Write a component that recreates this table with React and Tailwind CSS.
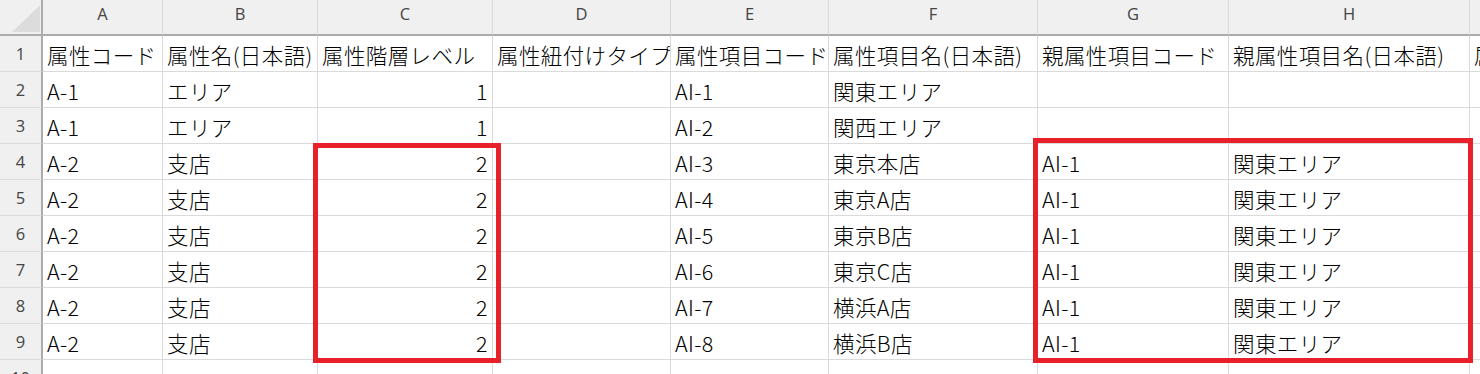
const columns = [
  { key: 'A', width: 120 },
  { key: 'B', width: 155 },
  { key: 'C', width: 175 },
  { key: 'D', width: 178 },
  { key: 'E', width: 158 },
  { key: 'F', width: 209 },
  { key: 'G', width: 191 },
  { key: 'H', width: 241 },
  { key: 'I', width: 240 },
]

const header = [
  '属性コード',
  '属性名(日本語)',
  '属性階層レベル',
  '属性紐付けタイプ',
  '属性項目コード',
  '属性項目名(日本語)',
  '親属性項目コード',
  '親属性項目名(日本語)',
  '属性項目名(英語)',
]

const rows = [
  ['A-1', 'エリア', 1, '', 'AI-1', '関東エリア', '', ''],
  ['A-1', 'エリア', 1, '', 'AI-2', '関西エリア', '', ''],
  ['A-2', '支店', 2, '', 'AI-3', '東京本店', 'AI-1', '関東エリア'],
  ['A-2', '支店', 2, '', 'AI-4', '東京A店', 'AI-1', '関東エリア'],
  ['A-2', '支店', 2, '', 'AI-5', '東京B店', 'AI-1', '関東エリア'],
  ['A-2', '支店', 2, '', 'AI-6', '東京C店', 'AI-1', '関東エリア'],
  ['A-2', '支店', 2, '', 'AI-7', '横浜A店', 'AI-1', '関東エリア'],
  ['A-2', '支店', 2, '', 'AI-8', '横浜B店', 'AI-1', '関東エリア'],
  ['', '', '', '', '', '', '', ''],
]

const gridTemplate = `43px ${columns.map((c) => c.width + 'px').join(' ')}`

function Cell({ value }) {
  const numeric = typeof value === 'number'
  return (
    <div
      className={`flex h-9 items-center overflow-hidden whitespace-nowrap border-r border-b border-[#dadada] bg-white pt-[4px] text-[21.5px] font-light tracking-[0.4px] text-black ${
        numeric ? 'justify-end pr-[4px]' : 'pl-[4px]'
      }`}
    >
      {value}
    </div>
  )
}

function RowNumber({ n }) {
  return (
    <div
      className="flex h-9 items-center justify-center border-r-2 border-b border-r-[#ababab] border-b-[#dadada] bg-[#f0f0f0] pt-[2px] text-[16.5px] text-[#444]"
      style={{ fontFamily: '"Open Sans", "Noto Sans", sans-serif' }}
    >
      {n}
    </div>
  )
}

export default function App() {
  return (
    <div
      className="relative h-[374px] w-[1480px] overflow-hidden bg-white"
      style={{ fontFamily: '"Noto Sans CJK JP", "Noto Sans", sans-serif' }}
    >
      <div className="grid" style={{ gridTemplateColumns: gridTemplate }}>
        {/* select-all corner */}
        <div className="relative h-9 border-r-2 border-b-2 border-[#ababab] bg-[#f0f0f0]">
          <svg className="absolute left-[12px] top-[5px]" width="28" height="27" viewBox="0 0 28 27">
            <polygon points="28,0 28,27 0,27" fill="#dcdcdc" />
          </svg>
        </div>
        {columns.map((c) => (
          <div
            key={c.key}
            className="flex h-9 items-center justify-center border-r border-b-2 border-r-[#d8d8d8] border-b-[#ababab] bg-[#f0f0f0] pb-[6px] text-[16.5px] text-[#444]"
            style={{ fontFamily: '"Open Sans", "Noto Sans", sans-serif' }}
          >
            {c.key}
          </div>
        ))}

        <RowNumber n={1} />
        {header.map((h, i) => (
          <Cell key={i} value={h} />
        ))}

        {rows.map((r, ri) => (
          <div key={ri} className="contents">
            <RowNumber n={ri + 2} />
            {r.map((v, ci) => (
              <Cell key={ci} value={v} />
            ))}
            <Cell value="" />
          </div>
        ))}
      </div>

      {/* highlighted ranges */}
      <div className="absolute left-[313px] top-[143px] h-[220px] w-[188px] border-[5px] border-[#e8202a]" />
      <div className="absolute left-[1033px] top-[138px] h-[225px] w-[440px] border-[5px] border-[#e8202a]" />
    </div>
  )
}
